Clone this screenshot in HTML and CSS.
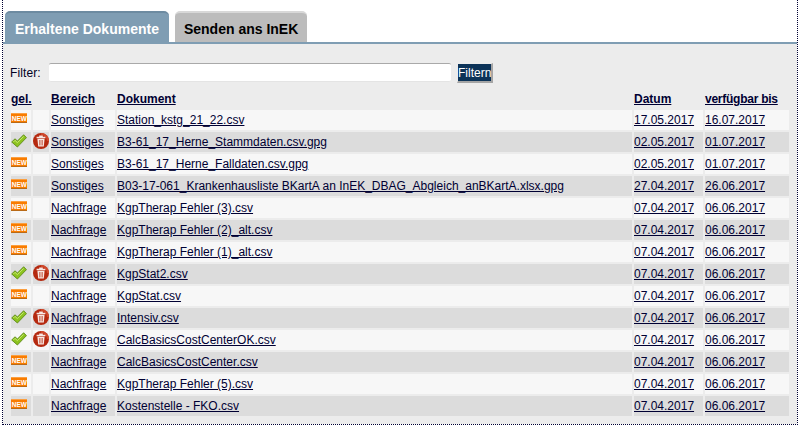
FILE: index.html
```html
<!DOCTYPE html>
<html lang="de">
<head>
<meta charset="utf-8">
<title>Dokumente</title>
<link rel="stylesheet" href="styles.css">
</head>
<body>
<svg class="defs" width="0" height="0" aria-hidden="true">
  <symbol id="check" viewBox="0 0 16 14">
    <path d="M0.7 8 L4 4.8 L6.4 7 L12.6 0.8 L15.5 3.6 L6.4 13 Z" fill="#8cc31f" stroke="#5f8a1a" stroke-width="0.9" stroke-linejoin="round"/>
    <path d="M2.4 8 L4 6.4 L6.4 8.7 L12.7 2.4" fill="none" stroke="#c9ea6e" stroke-width="1"/>
  </symbol>
  <symbol id="trash" viewBox="0 0 16 16">
    <circle cx="8" cy="8" r="8" fill="#b5290f"/>
    <path d="M8 0 A8 8 0 0 1 16 8 L14 8 A6 6 0 0 0 8 2 Z" fill="#d0482a"/>
    <path d="M3.6 3.8 H12.4 V5.2 H3.6 Z M6.2 2.6 H9.8 V3.8 H6.2 Z" fill="#f8e8e3"/>
    <path d="M4.4 5.8 H11.6 L10.8 13.4 H5.2 Z" fill="#f8e8e3"/>
    <path d="M6.6 7 V12.4 M8 7 V12.4 M9.4 7 V12.4" stroke="#c0452b" stroke-width="0.7"/>
  </symbol>
</svg>
<div class="frame">
  <nav class="tabs">
    <a class="tab tab-active">Erhaltene Dokumente</a>
    <a class="tab">Senden ans InEK</a>
  </nav>
  <main class="panel">
    <form class="filter">
      <label class="filter-label" for="f">Filter:</label>
      <input class="filter-input" id="f" type="text">
      <button class="filter-btn" type="button">Filtern</button>
    </form>
    <table class="docs">
      <colgroup>
        <col class="c-gel"><col class="c-del"><col class="c-ber"><col class="c-doc"><col class="c-dat"><col class="c-bis">
      </colgroup>
      <thead>
        <tr><th><a>gel.</a></th><th></th><th><a>Bereich</a></th><th><a>Dokument</a></th><th><a>Datum</a></th><th><a class="tight">verfügbar bis</a></th></tr>
      </thead>
      <tbody>
        <tr><td class="ic"><span class="new"><span class="new-text">NEW</span></span></td><td class="ic"></td><td><a>Sonstiges</a></td><td><a>Station_kstg_21_22.csv</a></td><td><a>17.05.2017</a></td><td><a>16.07.2017</a></td></tr>
        <tr><td class="ic"><svg class="i-check"><use href="#check"/></svg></td><td class="ic"><svg class="i-trash"><use href="#trash"/></svg></td><td><a>Sonstiges</a></td><td><a>B3-61_17_Herne_Stammdaten.csv.gpg</a></td><td><a>02.05.2017</a></td><td><a>01.07.2017</a></td></tr>
        <tr><td class="ic"><span class="new"><span class="new-text">NEW</span></span></td><td class="ic"></td><td><a>Sonstiges</a></td><td><a>B3-61_17_Herne_Falldaten.csv.gpg</a></td><td><a>02.05.2017</a></td><td><a>01.07.2017</a></td></tr>
        <tr><td class="ic"><span class="new"><span class="new-text">NEW</span></span></td><td class="ic"></td><td><a>Sonstiges</a></td><td><a>B03-17-061_Krankenhausliste BKartA an InEK_DBAG_Abgleich_anBKartA.xlsx.gpg</a></td><td><a>27.04.2017</a></td><td><a>26.06.2017</a></td></tr>
        <tr><td class="ic"><span class="new"><span class="new-text">NEW</span></span></td><td class="ic"></td><td><a>Nachfrage</a></td><td><a>KgpTherap Fehler (3).csv</a></td><td><a>07.04.2017</a></td><td><a>06.06.2017</a></td></tr>
        <tr><td class="ic"><span class="new"><span class="new-text">NEW</span></span></td><td class="ic"></td><td><a>Nachfrage</a></td><td><a>KgpTherap Fehler (2)_alt.csv</a></td><td><a>07.04.2017</a></td><td><a>06.06.2017</a></td></tr>
        <tr><td class="ic"><span class="new"><span class="new-text">NEW</span></span></td><td class="ic"></td><td><a>Nachfrage</a></td><td><a>KgpTherap Fehler (1)_alt.csv</a></td><td><a>07.04.2017</a></td><td><a>06.06.2017</a></td></tr>
        <tr><td class="ic"><svg class="i-check"><use href="#check"/></svg></td><td class="ic"><svg class="i-trash"><use href="#trash"/></svg></td><td><a>Nachfrage</a></td><td><a>KgpStat2.csv</a></td><td><a>07.04.2017</a></td><td><a>06.06.2017</a></td></tr>
        <tr><td class="ic"><span class="new"><span class="new-text">NEW</span></span></td><td class="ic"></td><td><a>Nachfrage</a></td><td><a>KgpStat.csv</a></td><td><a>07.04.2017</a></td><td><a>06.06.2017</a></td></tr>
        <tr><td class="ic"><svg class="i-check"><use href="#check"/></svg></td><td class="ic"><svg class="i-trash"><use href="#trash"/></svg></td><td><a>Nachfrage</a></td><td><a>Intensiv.csv</a></td><td><a>07.04.2017</a></td><td><a>06.06.2017</a></td></tr>
        <tr><td class="ic"><svg class="i-check"><use href="#check"/></svg></td><td class="ic"><svg class="i-trash"><use href="#trash"/></svg></td><td><a>Nachfrage</a></td><td><a>CalcBasicsCostCenterOK.csv</a></td><td><a>07.04.2017</a></td><td><a>06.06.2017</a></td></tr>
        <tr><td class="ic"><span class="new"><span class="new-text">NEW</span></span></td><td class="ic"></td><td><a>Nachfrage</a></td><td><a>CalcBasicsCostCenter.csv</a></td><td><a>07.04.2017</a></td><td><a>06.06.2017</a></td></tr>
        <tr><td class="ic"><span class="new"><span class="new-text">NEW</span></span></td><td class="ic"></td><td><a>Nachfrage</a></td><td><a>KgpTherap Fehler (5).csv</a></td><td><a>07.04.2017</a></td><td><a>06.06.2017</a></td></tr>
        <tr><td class="ic"><span class="new"><span class="new-text">NEW</span></span></td><td class="ic"></td><td><a>Nachfrage</a></td><td><a>Kostenstelle - FKO.csv</a></td><td><a>07.04.2017</a></td><td><a>06.06.2017</a></td></tr>
      </tbody>
    </table>
  </main>
</div>
</body>
</html>
```
FILE: styles.css
```css
html, body { margin: 0; padding: 0; background: #fff; }
body { font-family: "Liberation Sans", Arial, sans-serif; font-size: 12px; color: #000033; overflow: hidden; }
.defs { position: absolute; }
.frame {
  width: 796px;
  height: 425px;
  margin-left: 2px;
  box-sizing: border-box;
  border-left: 1px dotted #000033;
  border-right: 1px dotted #000033;
  border-bottom: 1px dotted #000033;
  display: flex;
  flex-direction: column;
}
.tabs { display: flex; gap: 6px; padding: 11px 0 0 2px; height: 31px; box-sizing: content-box; }
.tab {
  height: 31px;
  box-sizing: border-box;
  border-radius: 5px 5px 0 0;
  font-weight: bold;
  font-size: 14px;
  padding: 0 9px 0 9px;
  background: #bcbcbc;
  color: #000;
  border-top: 2px solid #d8d8d8;
  line-height: 33px;
}
.tab-active { background: #7f9db3; color: #fff; border-top-color: #6d8ba1; padding: 0 10px; }
.panel { flex: 1; background: #ececec; border-top: 2px solid #7f9db3; padding: 19px 0 0 6px; }
.filter { display: flex; align-items: flex-start; height: 20px; }
.filter-label { width: 39px; padding-left: 1px; line-height: 20px; font-size: 12px; letter-spacing: 0.1px; color: #000022; }
.filter-input {
  width: 402px; height: 19px; box-sizing: border-box; margin: 0;
  border: 0; border-top: 1px solid #a9a9a9; border-bottom: 1px solid #e4e4e4; border-radius: 2px; background: #fff;
}
.filter-btn {
  margin-left: 6px; width: 36px; height: 20px; padding: 0;
  background: #0c3358; color: #fff; font: 12px "Liberation Sans", Arial, sans-serif;
  border: 1px solid; border-color: #ececec #a5a5a5 #a5a5a5 #ececec;
  border-width: 1px 2px 2px 1px;
}
.docs { border-collapse: separate; border-spacing: 2px; table-layout: fixed; width: 782px; margin: 5px 0 0 0; }
.c-gel { width: 20px; } .c-del { width: 16px; } .c-ber { width: 64px; } .c-doc { width: 515px; } .c-dat { width: 69px; } .c-bis { width: 84px; }
.docs a { text-decoration: underline; color: #000033; }
.docs .tight { letter-spacing: -0.25px; }
.docs th { text-align: left; font-weight: bold; height: 18px; padding: 0; vertical-align: middle; }
.docs td { height: 20px; padding: 0; background: #f7f7f7; white-space: nowrap; vertical-align: middle; }
.docs tbody tr:nth-child(even) td { background: #dcdcdc; }
.docs td.ic { vertical-align: top; }
.new {
  display: flex; justify-content: center; align-items: center;
  width: 16px; height: 10px; margin-top: 3px; box-sizing: border-box;
  background: #f97c00; border-bottom: 1px solid #b86a18; border-top: 1px solid #fb9f40;
}
.new-text { display: block; flex: none; color: #fff; font: bold 8px/7px "Liberation Sans", Arial, sans-serif; transform: scaleX(0.8); }
.i-check { display: block; width: 16px; height: 14px; margin-top: 2px; }
.i-trash { display: block; width: 16px; height: 16px; margin-top: 1px; }
```
